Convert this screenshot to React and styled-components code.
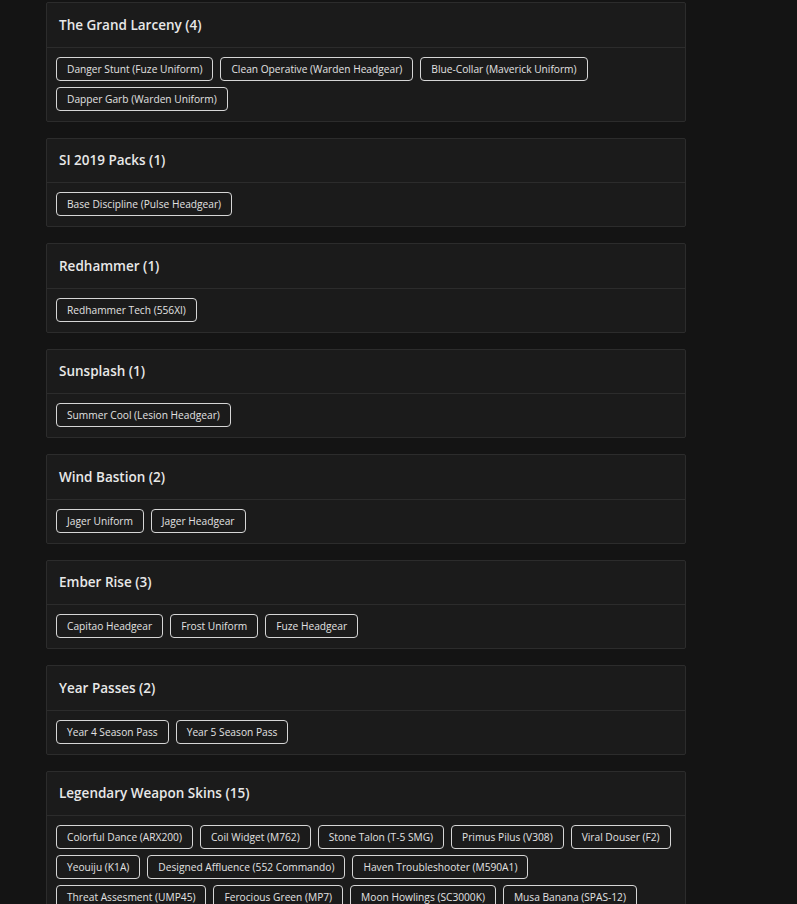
import React from 'react'
import styled, { createGlobalStyle } from 'styled-components'

const GlobalStyle = createGlobalStyle`
  html, body {
    margin: 0;
    padding: 0;
    background: #141414;
  }
  body {
    font-family: "Open Sans", "Noto Sans", sans-serif;
    color: #e6e6e6;
  }
`

const Page = styled.div`
  padding: 2px 0 0 46px;
  display: flex;
  flex-direction: column;
  gap: 16px;
  width: 640px;
`

const Card = styled.section`
  background: #1b1b1b;
  border: 1px solid #2c2c2c;
  border-radius: 2px;
`

const CardHeader = styled.header`
  height: 43.5px;
  display: flex;
  align-items: center;
  padding: 0 12px;
  border-bottom: 1px solid #2c2c2c;
  font-size: 13.5px;
  font-weight: 600;
  color: #e8e8e8;
`

const TagList = styled.div`
  display: flex;
  flex-wrap: wrap;
  gap: 6px 7px;
  padding: 9px 9px 10px;
`

const Tag = styled.span`
  display: inline-flex;
  align-items: center;
  box-sizing: border-box;
  height: 24px;
  padding: 0 10px;
  border: 1px solid #d6d6d6;
  border-radius: 4px;
  font-size: 10.2px;
  color: #e2e2e2;
  white-space: nowrap;
`

const groups = [
  {
    name: 'The Grand Larceny',
    items: [
      'Danger Stunt (Fuze Uniform)',
      'Clean Operative (Warden Headgear)',
      'Blue-Collar (Maverick Uniform)',
      'Dapper Garb (Warden Uniform)',
    ],
  },
  { name: 'SI 2019 Packs', items: ['Base Discipline (Pulse Headgear)'] },
  { name: 'Redhammer', items: ['Redhammer Tech (556XI)'] },
  { name: 'Sunsplash', items: ['Summer Cool (Lesion Headgear)'] },
  { name: 'Wind Bastion', items: ['Jager Uniform', 'Jager Headgear'] },
  { name: 'Ember Rise', items: ['Capitao Headgear', 'Frost Uniform', 'Fuze Headgear'] },
  { name: 'Year Passes', items: ['Year 4 Season Pass', 'Year 5 Season Pass'] },
  {
    name: 'Legendary Weapon Skins',
    count: 15,
    items: [
      'Colorful Dance (ARX200)',
      'Coil Widget (M762)',
      'Stone Talon (T-5 SMG)',
      'Primus Pilus (V308)',
      'Viral Douser (F2)',
      'Yeouiju (K1A)',
      'Designed Affluence (552 Commando)',
      'Haven Troubleshooter (M590A1)',
      'Threat Assesment (UMP45)',
      'Ferocious Green (MP7)',
      'Moon Howlings (SC3000K)',
      'Musa Banana (SPAS-12)',
      'Spiked Hide (G36C)',
      'Brass Knuckles (Mk1 9mm)',
      'Golden Hour (LFP586)',
    ],
  },
]

const App = () => (
  <>
    <GlobalStyle />
    <Page>
      {groups.map((g) => (
        <Card key={g.name}>
          <CardHeader>
            {g.name} ({g.count ?? g.items.length})
          </CardHeader>
          <TagList>
            {g.items.map((item) => (
              <Tag key={item}>{item}</Tag>
            ))}
          </TagList>
        </Card>
      ))}
    </Page>
  </>
)

export default App
